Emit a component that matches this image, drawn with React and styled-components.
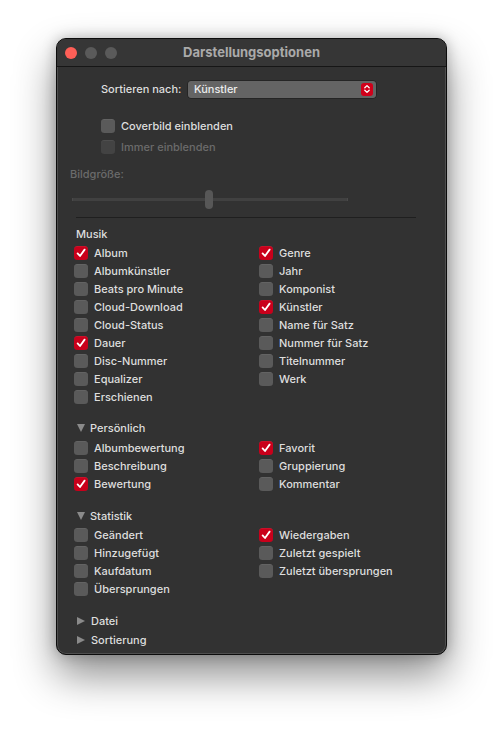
import React from "react";
import styled, { createGlobalStyle } from "styled-components";

const GlobalStyle = createGlobalStyle`
  html, body { margin: 0; padding: 0; background: #ffffff; }
  body { font-family: Inter, "Noto Sans", "Liberation Sans", sans-serif; -webkit-font-smoothing: antialiased; }
`;

const Page = styled.div`
  padding: 38px 0 0 56px;
  height: 729px;
  box-sizing: border-box;
`;

const Window = styled.div`
  width: 391px;
  height: 617px;
  box-sizing: border-box;
  background: #323232;
  border-radius: 10px;
  border: 1px solid #0c0c0c;
  box-shadow: inset 0 0 0 1px rgba(255,255,255,0.14), 0 20px 42px rgba(0,0,0,0.45), 0 0 14px rgba(0,0,0,0.25);
  overflow: hidden;
  color: #dedede;
  font-size: 11px;
  font-weight: 500;
`;

const TitleBar = styled.div`
  height: 27px;
  display: grid;
  grid-template-columns: 1fr auto 1fr;
  align-items: center;
  border-bottom: 1px solid #161616;
  background: #363636;
  padding: 0 8px;
`;

const Lights = styled.div`
  display: flex;
  gap: 8px;
`;

const Light = styled.span`
  width: 12px;
  height: 12px;
  border-radius: 50%;
  background: ${(p) => p.$c};
`;

const Title = styled.div`
  font-size: 13px;
  font-weight: 700;
  color: #aaaaaa;
  margin-top: -1px;
`;

const Content = styled.div`
  display: flex;
  flex-direction: column;
`;

const SortRow = styled.div`
  display: flex;
  align-items: center;
  height: 18px;
  margin-top: 13px;
  padding-left: 44px;
`;

const SortLabel = styled.span`
  width: 87px;
`;

const Popup = styled.div`
  width: 188px;
  height: 17px;
  box-sizing: border-box;
  background: #646464;
  border-radius: 3px;
  box-shadow: 0 0 0 0.5px rgba(0,0,0,0.5);
  display: flex;
  align-items: center;
  justify-content: space-between;
  padding: 0 3px 0 6px;
  color: #ececec;
`;

const Stepper = styled.span`
  width: 12px;
  height: 13px;
  border-radius: 3px;
  background: #d0001a;
  display: flex;
  align-items: center;
  justify-content: center;
`;

const Row = styled.label`
  display: flex;
  align-items: center;
  height: 18px;
  gap: 6px;
  margin-top: ${(p) => p.$mt || 0}px;
  padding-left: ${(p) => p.$pl || 0}px;
  color: ${(p) => (p.$disabled ? "#6b6b6b" : "#dedede")};
  white-space: nowrap;
`;

const Box = styled.span`
  width: 14px;
  height: 14px;
  flex: none;
  box-sizing: border-box;
  border-radius: 3.5px;
  display: flex;
  align-items: center;
  justify-content: center;
  background: ${(p) => (p.$checked ? "#c9001b" : p.$disabled ? "#434343" : "#5a5a5a")};
  box-shadow: inset 0 0.5px 0 rgba(255,255,255,0.12);
`;

const SmallLabel = styled.div`
  margin-top: 10px;
  padding-left: 13px;
  height: 16px;
  line-height: 16px;
  color: #6b6b6b;
`;

const Slider = styled.div`
  margin: 7px 0 0 15px;
  width: 276px;
  height: 20px;
  position: relative;
  display: flex;
  align-items: center;
`;

const Track = styled.div`
  width: 100%;
  height: 3px;
  background: #414141;
  border-left: 1px solid #4a4a4a;
  border-right: 1px solid #4a4a4a;
`;

const Knob = styled.div`
  position: absolute;
  left: 133px;
  top: 1px;
  width: 8px;
  height: 19px;
  border-radius: 4px;
  background: #575757;
`;

const Separator = styled.div`
  margin: 8px 30px 0 19px;
  height: 1px;
  background: #1f1f1f;
`;

const Header = styled.div`
  display: flex;
  align-items: center;
  height: 18px;
  margin-top: ${(p) => p.$mt}px;
  padding-left: ${(p) => (p.$plain ? 19 : 20)}px;
  gap: 5px;
`;

const Tri = styled.span`
  width: 0;
  height: 0;
  ${(p) =>
    p.$open
      ? `border-left: 4.5px solid transparent; border-right: 4.5px solid transparent; border-top: 8px solid #8a8a8a;`
      : `border-top: 4.5px solid transparent; border-bottom: 4.5px solid transparent; border-left: 8px solid #8a8a8a; margin-right: 1px;`}
`;

const Grid = styled.div`
  display: grid;
  grid-template-columns: 185px 1fr;
  grid-auto-flow: column;
  grid-template-rows: repeat(${(p) => p.$rows}, 18px);
  margin-top: ${(p) => p.$mt}px;
  padding-left: 17px;
`;

const Check = () => (
  <svg width="10" height="10" viewBox="0 0 10 10">
    <path d="M1.6 5.4 L4 8 L8.6 1.6" fill="none" stroke="#fff" strokeWidth="1.8" strokeLinecap="round" strokeLinejoin="round" />
  </svg>
);

const CB = ({ label, checked, disabled, mt, pl }) => (
  <Row $mt={mt} $pl={pl} $disabled={disabled}>
    <Box $checked={checked} $disabled={disabled}>{checked && <Check />}</Box>
    <span>{label}</span>
  </Row>
);

const Empty = styled.div``;

const Section = ({ items, rows, mt }) => {
  const [left, right] = items;
  const cells = [];
  for (let i = 0; i < rows; i++) {
    const it = left[i];
    cells.push(it ? <CB key={"l" + i} label={it[0]} checked={it[1]} /> : <Empty key={"l" + i} />);
  }
  for (let i = 0; i < rows; i++) {
    const it = right[i];
    cells.push(it ? <CB key={"r" + i} label={it[0]} checked={it[1]} /> : <Empty key={"r" + i} />);
  }
  return <Grid $rows={rows} $mt={mt}>{cells}</Grid>;
};

const musik = [
  [["Album", true], ["Albumkünstler"], ["Beats pro Minute"], ["Cloud-Download"], ["Cloud-Status"], ["Dauer", true], ["Disc-Nummer"], ["Equalizer"], ["Erschienen"]],
  [["Genre", true], ["Jahr"], ["Komponist"], ["Künstler", true], ["Name für Satz"], ["Nummer für Satz"], ["Titelnummer"], ["Werk"]],
];
const persoenlich = [
  [["Albumbewertung"], ["Beschreibung"], ["Bewertung", true]],
  [["Favorit", true], ["Gruppierung"], ["Kommentar"]],
];
const statistik = [
  [["Geändert"], ["Hinzugefügt"], ["Kaufdatum"], ["Übersprungen"]],
  [["Wiedergaben", true], ["Zuletzt gespielt"], ["Zuletzt übersprungen"]],
];

export default function App() {
  return (
    <Page>
      <GlobalStyle />
      <Window>
        <TitleBar>
          <Lights>
            <Light $c="#fe5f57" />
            <Light $c="#5a5a5a" />
            <Light $c="#5a5a5a" />
          </Lights>
          <Title>Darstellungsoptionen</Title>
          <span />
        </TitleBar>
        <Content>
          <SortRow>
            <SortLabel>Sortieren nach:</SortLabel>
            <Popup>
              <span>Künstler</span>
              <Stepper>
                <svg width="8" height="10" viewBox="0 0 8 10">
                  <path d="M1.8 3.8 L4 1.6 L6.2 3.8 M1.8 6.2 L4 8.4 L6.2 6.2" fill="none" stroke="#fff" strokeWidth="1.3" strokeLinecap="round" strokeLinejoin="round" />
                </svg>
              </Stepper>
            </Popup>
          </SortRow>
          <CB label="Coverbild einblenden" mt={19} pl={44} />
          <CB label="Immer einblenden" mt={3} pl={44} disabled />
          <SmallLabel>Bildgröße:</SmallLabel>
          <Slider>
            <Track />
            <Knob />
          </Slider>
          <Separator />
          <Header $mt={7} $plain>Musik</Header>
          <Section items={musik} rows={9} mt={1} />
          <Header $mt={13}><Tri $open />Persönlich</Header>
          <Section items={persoenlich} rows={3} mt={2} />
          <Header $mt={14}><Tri $open />Statistik</Header>
          <Section items={statistik} rows={4} mt={1} />
          <Header $mt={14}><Tri />Datei</Header>
          <Header $mt={1}><Tri />Sortierung</Header>
        </Content>
      </Window>
    </Page>
  );
}
